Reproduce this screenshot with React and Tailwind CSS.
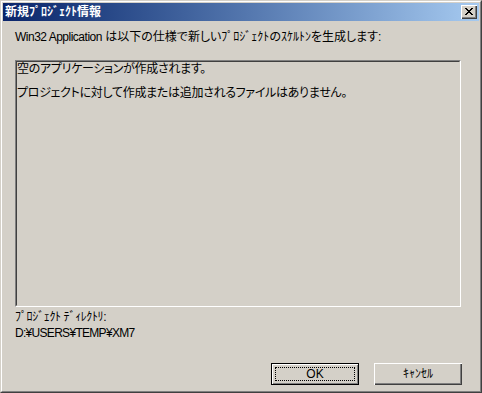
function H({ children }) {
  return <span className="[font-feature-settings:normal]">{children}</span>;
}

export default function App() {
  const xPixels = [
    [0, 0], [1, 0], [6, 0], [7, 0],
    [1, 1], [2, 1], [5, 1], [6, 1],
    [2, 2], [3, 2], [4, 2], [5, 2],
    [3, 3], [4, 3],
    [2, 4], [3, 4], [4, 4], [5, 4],
    [1, 5], [2, 5], [5, 5], [6, 5],
    [0, 6], [1, 6], [6, 6], [7, 6],
  ];
  return (
    <div className="w-[482px] h-[393px] bg-[#d4d0c8] border border-t-[#d4d0c8] border-l-[#d4d0c8] border-r-[#404040] border-b-[#404040] font-['Liberation_Sans','Noto_Sans_CJK_JP',sans-serif] text-[12px] text-black [font-feature-settings:'palt']">
      <div className="h-full border border-t-white border-l-white border-r-[#808080] border-b-[#808080] p-px flex flex-col">
        <div className="h-[18px] shrink-0 flex items-center justify-between bg-linear-to-r from-[#0a246a] to-[#a6caf0] pl-[2px] pr-[2px]">
          <span className="text-white font-bold leading-none">新規<H>ﾌﾟﾛｼﾞｪｸﾄ</H>情報</span>
          <div className="w-[16px] h-[14px] bg-[#d4d0c8] shadow-[inset_1px_1px_#fff,inset_-1px_-1px_#404040,inset_-2px_-2px_#808080] flex items-start justify-start pl-[4px] pt-[3px]">
            <svg width="8" height="7" viewBox="0 0 8 7" shapeRendering="crispEdges">
              {xPixels.map(([x, y], i) => (
                <rect key={i} x={x} y={y} width="1" height="1" fill="#000" />
              ))}
            </svg>
          </div>
        </div>
        <div className="flex-1 flex flex-col pl-[12px] pr-[17px]">
          <p className="mt-[8px] leading-[16px] whitespace-nowrap">
            <span className="tracking-[-0.5px]">Win32 Application</span> は以下の仕様で新しい<H>ﾌﾟﾛｼﾞｪｸﾄ</H>の<H>ｽｹﾙﾄﾝ</H>を生成します:
          </p>
          <div className="mt-[15px] w-[446px] h-[247px] border border-t-[#808080] border-l-[#808080] border-r-white border-b-white">
            <div className="h-full border border-t-[#404040] border-l-[#404040] border-r-[#d4d0c8] border-b-[#d4d0c8] pt-px pl-0 leading-[12px] tracking-[-0.3px]">
              <p className="whitespace-nowrap">空のアプリケーションが作成されます。</p>
              <p className="mt-[12px] whitespace-nowrap">プロジェクトに対して作成または追加されるファイルはありません。</p>
            </div>
          </div>
          <p className="mt-[2px] leading-[16px] whitespace-nowrap tracking-[-0.4px]"><H>ﾌﾟﾛｼﾞｪｸﾄ ﾃﾞｨﾚｸﾄﾘ</H>:</p>
          <p className="leading-[16px] whitespace-nowrap tracking-[-0.7px]">D:¥USERS¥TEMP¥XM7</p>
          <div className="mt-[22px] flex justify-end gap-[15px]">
            <button className="w-[88px] h-[22px] bg-[#d4d0c8] border border-black shadow-[inset_1px_1px_#fff,inset_-1px_-1px_#808080] p-[3px] flex">
              <span className="flex-1 border border-dotted border-black flex items-center justify-center leading-none">OK</span>
            </button>
            <button className="w-[88px] h-[22px] bg-[#d4d0c8] shadow-[inset_1px_1px_#fff,inset_-1px_-1px_#404040,inset_-2px_-2px_#808080] flex items-center justify-center leading-none">
              <H>ｷｬﾝｾﾙ</H>
            </button>
          </div>
        </div>
      </div>
    </div>
  );
}
